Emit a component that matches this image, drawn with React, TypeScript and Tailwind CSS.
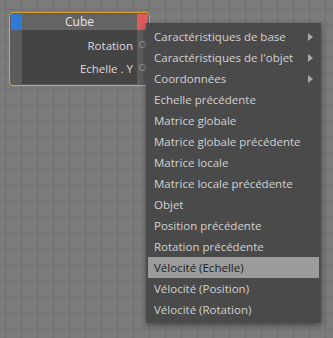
import React from "react";

const items: { label: string; sub?: boolean; active?: boolean }[] = [
  { label: "Caractéristiques de base", sub: true },
  { label: "Caractéristiques de l'objet", sub: true },
  { label: "Coordonnées", sub: true },
  { label: "Echelle précédente" },
  { label: "Matrice globale" },
  { label: "Matrice globale précédente" },
  { label: "Matrice locale" },
  { label: "Matrice locale précédente" },
  { label: "Objet" },
  { label: "Position précédente" },
  { label: "Rotation précédente" },
  { label: "Vélocité (Echelle)", active: true },
  { label: "Vélocité (Position)" },
  { label: "Vélocité (Rotation)" },
];

export default function App() {
  return (
    <div
      className="relative w-[333px] h-[338px] overflow-hidden bg-[#7b7b7b] bg-[linear-gradient(to_right,#717171_1px,transparent_1px),linear-gradient(to_bottom,#717171_1px,transparent_1px)] bg-[size:16px_16px] bg-[position:5px_9px]"
      style={{ fontFamily: '"Open Sans", "Liberation Sans", sans-serif' }}
    >
      {/* Node */}
      <div className="absolute left-[9px] top-[12px] w-[141px] h-[74px] rounded-[4px] border border-[#e0a431] bg-[#5c5c5c] p-px flex flex-col overflow-hidden">
        <div className="h-[16px] flex items-stretch bg-[#646464]">
          <div className="w-[11px] bg-[#2f7ad6]" />
          <div className="flex-1 flex items-center justify-center text-[12px] text-[#e4e4e4] leading-none">
            Cube
          </div>
          <div className="w-[11px] bg-[#dd5c5c]" />
        </div>
        <div className="flex-1 flex">
          <div className="w-[11px] bg-[#5c5c5c]" />
          <div className="flex-1 bg-[#444444] flex flex-col items-end pr-[4px] pt-[8px] gap-[7px] text-[11.5px] text-[#dcdcdc] leading-[16px]">
            <div>Rotation</div>
            <div className="whitespace-pre">Echelle . Y</div>
          </div>
          <div className="w-[11px] bg-[#5c5c5c] flex flex-col items-center pt-[11px] gap-[16px]">
            <div className="w-[7px] h-[7px] rounded-full border border-[#9a9a9a]" />
            <div className="w-[7px] h-[7px] rounded-full border border-[#9a9a9a]" />
          </div>
        </div>
      </div>

      {/* Menu */}
      <div className="absolute left-[146px] top-[23px] w-[175px] bg-[#4a4a4a] py-[3px] px-[2px] shadow-[0_2px_6px_rgba(0,0,0,0.45)]">
        {items.map((it) => (
          <div
            key={it.label}
            className={
              "h-[21px] flex items-center pl-[6px] pr-[6px] text-[11.5px] leading-none " +
              (it.active ? "bg-[#9b9b9b] text-[#1c1c1c]" : "text-[#d2d2d2]")
            }
          >
            <span className="flex-1 whitespace-nowrap">{it.label}</span>
            {it.sub && (
              <svg width="5" height="8" viewBox="0 0 5 8" className="shrink-0">
                <path d="M0 0 L5 4 L0 8 Z" fill="#a8a8a8" />
              </svg>
            )}
          </div>
        ))}
      </div>
    </div>
  );
}
